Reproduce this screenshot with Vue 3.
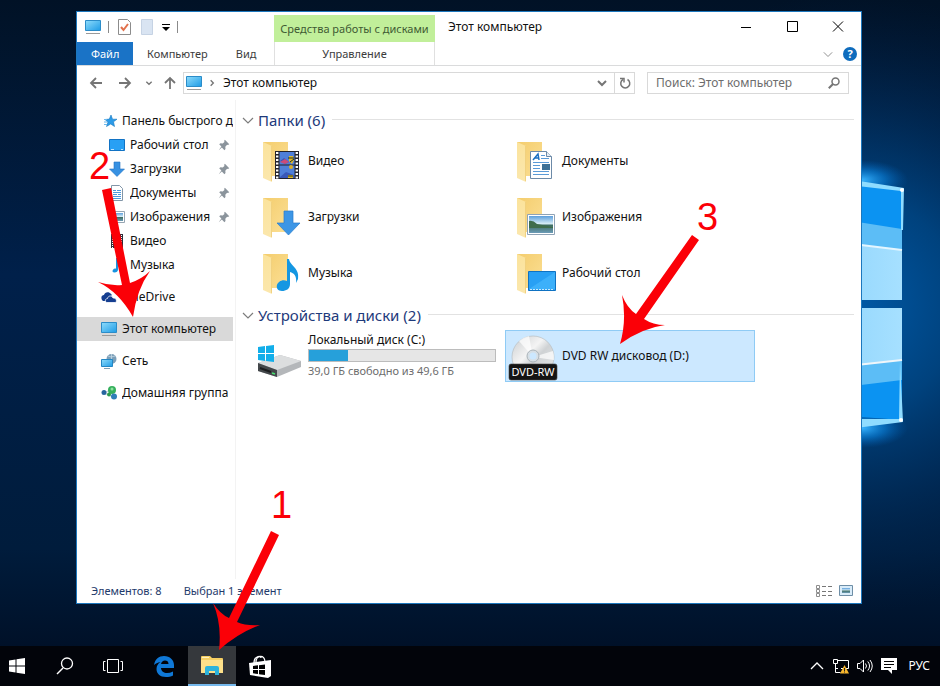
<script setup>
import { ref } from 'vue'

const places = [
  { label: 'Панель быстрого до', icon: 'star' },
  { label: 'Рабочий стол', icon: 'desktop', child: true, pinned: true },
  { label: 'Загрузки', icon: 'down', child: true, pinned: true },
  { label: 'Документы', icon: 'doc', child: true, pinned: true },
  { label: 'Изображения', icon: 'picture', child: true, pinned: true },
  { label: 'Видео', icon: 'film', child: true },
  { label: 'Музыка', icon: 'note', child: true },
  { label: 'OneDrive', icon: 'cloud', spaced: true },
  { label: 'Этот компьютер', icon: 'pc', spaced: true, current: true },
  { label: 'Сеть', icon: 'network', spaced: true },
  { label: 'Домашняя группа', icon: 'homegroup', spaced: true },
]

const folders = [
  { label: 'Видео', icon: 'video' },
  { label: 'Документы', icon: 'documents' },
  { label: 'Загрузки', icon: 'downloads' },
  { label: 'Изображения', icon: 'pictures' },
  { label: 'Музыка', icon: 'music' },
  { label: 'Рабочий стол', icon: 'desk' },
]

const totalGb = 49.6
const freeGb = 39.0
const used = Math.round((1 - freeGb / totalGb) * 100) + '%'
const query = ref('')
</script>

<template>
  <div class="desktop">
    <svg class="wallpaper" viewBox="0 0 940 686" preserveAspectRatio="xMaxYMid slice" aria-hidden="true">
      <defs>
        <linearGradient id="sky" x1="0" y1="0" x2="0" y2="1">
          <stop offset="0" stop-color="#011226" />
          <stop offset=".4" stop-color="#00204a" />
          <stop offset=".8" stop-color="#001c3c" />
          <stop offset="1" stop-color="#000c20" />
        </linearGradient>
        <radialGradient id="glow" gradientUnits="userSpaceOnUse" cx="850" cy="304" r="310">
          <stop offset="0" stop-color="#005aa8" />
          <stop offset=".35" stop-color="#004684" stop-opacity=".9" />
          <stop offset="1" stop-color="#002048" stop-opacity="0" />
        </radialGradient>
        <radialGradient id="flare">
          <stop offset="0" stop-color="#38b4ff" />
          <stop offset=".5" stop-color="#0a84e0" stop-opacity=".6" />
          <stop offset="1" stop-color="#0060b8" stop-opacity="0" />
        </radialGradient>
        <linearGradient id="pane" x1="0" y1="0" x2="1" y2="0">
          <stop offset="0" stop-color="#8ed4fc" />
          <stop offset="1" stop-color="#a6e0ff" />
        </linearGradient>
      </defs>
      <rect width="940" height="686" fill="url(#sky)" />
      <rect width="940" height="686" fill="url(#glow)" />
      <ellipse cx="862" cy="180" rx="46" ry="20" fill="url(#flare)" />
      <ellipse cx="862" cy="428" rx="46" ry="20" fill="url(#flare)" />
      <path d="M820 182 902 189V300H820Z" fill="#0b93f2" />
      <path d="M820 216 902 229V300H820Z" fill="#5cbdf6" />
      <path d="M820 241 902 250V300H820Z" fill="url(#pane)" />
      <path d="M820 240 902 250" stroke="#e4f6ff" stroke-width="2" />
      <path d="M820 308H902V420L820 414Z" fill="#0b93f2" />
      <path d="M820 308H902V380L820 390Z" fill="#5cbdf6" />
      <path d="M820 308H902V360L820 370Z" fill="url(#pane)" />
      <path d="M820 369 902 360" stroke="#f0f6fa" stroke-width="2" />
      <path d="M840 178 904 188 903 230H901V191L840 184Z" fill="#8fdcff" />
      <path d="M900 360 903 422 840 430V419L899 419Z" fill="#8fdcff" />
      <circle cx="902" cy="190" r="2" fill="#fff" />
      <circle cx="901" cy="420" r="2" fill="#fff" />
    </svg>

    <svg class="sprite" aria-hidden="true">
      <defs>
        <linearGradient id="screen" x1="0" y1="0" x2="1" y2="1">
          <stop offset="0" stop-color="#8fdcfb" />
          <stop offset="1" stop-color="#1d9be6" />
        </linearGradient>
        <linearGradient id="cover" x1="0" y1="0" x2="0" y2="1">
          <stop offset="0" stop-color="#fbe39c" />
          <stop offset="1" stop-color="#fbe7ad" />
        </linearGradient>
        <linearGradient id="back" x1="0" y1="0" x2="1" y2="1">
          <stop offset="0" stop-color="#f4cd6d" />
          <stop offset="1" stop-color="#fbdf95" />
        </linearGradient>
        <linearGradient id="disc" x1="0" y1="0" x2="1" y2="1">
          <stop offset="0" stop-color="#c9ccce" />
          <stop offset=".4" stop-color="#f4f4f4" />
          <stop offset=".55" stop-color="#cfd2d4" />
          <stop offset="1" stop-color="#e9ebec" />
        </linearGradient>
        <linearGradient id="lake" x1="0" y1="0" x2="0" y2="1">
          <stop offset="0" stop-color="#5d9fdc" />
          <stop offset=".45" stop-color="#d5ecf6" />
          <stop offset=".55" stop-color="#3f6d62" />
          <stop offset="1" stop-color="#6c9cb8" />
        </linearGradient>
      </defs>
      <symbol id="i-pc" viewBox="0 0 16 16">
        <path d="M.5 1.500h15v10H.5z" fill="url(#screen)" stroke="#2b8cc8" />
        <path d="M1 14.500h14" stroke="#9a9a9a" />
      </symbol>
      <symbol id="i-star" viewBox="0 0 16 16">
        <path d="m10 2 1.500 4.200H16l-3.500 2.600 1 4.700L9.700 11 5.500 13.500 7 9 4 6.500l4.300-.4z" fill="#2b9be8" stroke="#1878c0" stroke-width=".6" />
        <path d="M3 6.500h3M3 9h3M3 11.500h3" stroke="#6cb9ee" />
      </symbol>
      <symbol id="i-desktop" viewBox="0 0 16 16">
        <path d="M.5 2.500h15v11H.5z" fill="#28a0f4" stroke="#1273c4" />
        <path d="M2 12.500h3M12 12.500h2" stroke="#bfe5ff" />
      </symbol>
      <symbol id="i-down" viewBox="0 0 16 16">
        <path d="M5 1h6v7h4.500L8 15.500.5 8H5z" fill="#3791e2" stroke="#2474c2" stroke-width=".6" />
      </symbol>
      <symbol id="i-doc" viewBox="0 0 16 16">
        <path d="M2.500.5h8l3 3v12h-11z" fill="#fff" stroke="#8296a8" />
        <path d="M4 5.500h3M8 5.500h4M4 7.500h8M4 9.500h4M9 9.500h3M4 11.500h8M4 13.500h8" stroke="#4d9ade" />
      </symbol>
      <symbol id="i-picture" viewBox="0 0 16 16">
        <path d="M.5 2.500h15v11H.5z" fill="#fff" stroke="#96a5b2" />
        <path d="M2 4h12v8H2z" fill="url(#lake)" />
      </symbol>
      <symbol id="i-film" viewBox="0 0 16 16">
        <path d="M2 1h12v14H2z" fill="#2a2e3a" />
        <path d="M5 2h6v5H5zM5 9h6v5H5z" fill="#5c86cf" />
        <path d="M3.500 2v13M12.500 2v13" stroke="#fff" stroke-dasharray="1 1" />
      </symbol>
      <symbol id="i-note" viewBox="0 0 16 16">
        <path d="M7 1h1.500c0 3 4.500 4 3.500 8-.5-2-2-2.500-3-2.800V12.500c0 2-1.500 3-3.500 3S3 14 4 12.700s2-1.500 3-1z" fill="#1793e0" />
      </symbol>
      <symbol id="i-cloud" viewBox="0 0 16 16">
        <path d="M1 11C-.5 8 1 6 3 6c.5-3 5-4 7-1l1 1-6 6H2z" fill="#153e90" />
        <path d="M5.500 13.500C3.500 12 4.500 9.500 6.500 9.500 7 6.500 11 6 12 9c3-.5 4.500 3 2.500 4.500z" fill="#153e90" stroke="#fff" stroke-width=".8" />
      </symbol>
      <symbol id="i-network" viewBox="0 0 16 16">
        <circle cx="10.500" cy="6" r="5" fill="#7d9fb8" />
        <path d="M7 3q3 2 7 0M10.500 1v5" stroke="#c3d8e4" fill="none" stroke-width=".8" />
        <path d="M.5 6.500h11v7H.5z" fill="url(#screen)" stroke="#2487c4" />
        <path d="M3 15.500h6" stroke="#7fa0b5" />
      </symbol>
      <symbol id="i-homegroup" viewBox="0 0 16 16">
        <path d="m3 8 8-4M3 8l9 4" stroke="#b9cdd5" />
        <circle cx="3" cy="7.500" r="2.500" fill="#27659e" />
        <circle cx="11" cy="5" r="4" fill="#35b05c" />
        <circle cx="11" cy="4" r="1.500" fill="#8ee09f" />
        <circle cx="8" cy="9.500" r="2" fill="#2c9b4c" />
        <circle cx="13" cy="11.500" r="3" fill="#2f7eb8" />
      </symbol>
      <symbol id="i-pin" viewBox="0 0 16 16">
        <path d="m9 2 5 5-1.500 1-1-.3-2 2.300.2 2.500L8.500 14 5.500 10.800 2 14l3-4.300L2.500 7 4 6l2.500.3L8.500 4.500 8.200 3z" fill="#8b949c" />
      </symbol>
      <symbol id="i-chev" viewBox="0 0 12 12">
        <path d="m1 4 5 5 5-5" fill="none" stroke="currentColor" stroke-width="1.200" />
      </symbol>
      <symbol id="i-chev-bold" viewBox="0 0 12 12">
        <path d="m2 4 4 4 4-4" fill="none" stroke="currentColor" stroke-width="2" />
      </symbol>
      <symbol id="i-arrow" viewBox="0 0 14 14">
        <path d="M13 7H2M7 2 2 7l5 5" fill="none" stroke="currentColor" stroke-width="1.800" />
      </symbol>

      <symbol id="f-folder" viewBox="0 0 48 48">
        <path d="M6 5h25v34H13z" fill="url(#back)" />
        <path d="m6 5 9 4v36l-9-4z" fill="url(#cover)" />
        <path d="m14.500 9v35" stroke="#ecc870" stroke-width=".7" />
      </symbol>
      <symbol id="f-video" viewBox="0 0 48 48">
        <path d="M18 14h24v28H18z" fill="#23232b" />
        <path d="M22.500 15h15v12.500h-15zM22.500 28.500h15V41h-15z" fill="#4f7fd8" />
        <path d="m23 24 4-3 5 4-4 2zM23 40l6-5 8 3v3H23z" fill="#3a58b8" />
        <path d="m23 25 5-3 4 3-4 2z" fill="#cc4b78" />
        <path d="M32 19h4l1 4-2 4-3-3zM31 38h5v3h-5z" fill="#e0b82c" />
        <path d="M31 21h6M33 25l4-3M31 39h5" stroke="#22321c" />
        <circle cx="34" cy="30" r="2" fill="#dcae28" />
        <path d="M20.200 15v27M39.800 15v27" stroke="#fff" stroke-width="2.400" stroke-dasharray="2 1.500" />
      </symbol>
      <symbol id="f-documents" viewBox="0 0 48 48">
        <path d="M19.500 14.500h16l5 5v22h-21z" fill="#fff" stroke="#6c8aa8" />
        <path d="M35.500 14.500v5h5" fill="#e5edf4" stroke="#6c8aa8" />
        <path d="m22 23 5-6 1 6M24 21h4" fill="none" stroke="#1a70c2" stroke-width="1.500" />
        <path d="M30 18.500h4M30 21.500h8M22 25.500h16M22 28.500h7M22 31.500h7M22 34.500h16M22 37.500h16" stroke="#5a9bd8" />
        <path d="M31 27h8v6h-8z" fill="#3f7196" />
      </symbol>
      <symbol id="f-downloads" viewBox="0 0 48 48">
        <path d="M27 18h9v12h7L31.500 42 20 30h7z" fill="#3c96e6" stroke="#2a7dca" stroke-width=".7" />
      </symbol>
      <symbol id="f-pictures" viewBox="0 0 48 48">
        <path d="M16.500 21.500h27v20h-27z" fill="#fff" stroke="#8fa3b6" />
        <path d="M18 23h24v17H18z" fill="url(#lake)" />
        <path d="M18 28q4-1 8 3l16 3v1H18z" fill="#3f6d4c" />
      </symbol>
      <symbol id="f-music" viewBox="0 0 48 48">
        <path d="M30 10h2c1 7 11 9 9 20l-2 4c1-7-2-10-6-11v12c0 5-4 7-8 7s-6-3-5-6 5-6 10-4z" fill="#1597e2" />
      </symbol>
      <symbol id="f-desk" viewBox="0 0 48 48">
        <path d="M17.500 22.500h27v19h-27z" fill="#28a0f4" stroke="#0f72c2" />
        <path d="m18 40 26-17v17z" fill="#3cb0fa" />
        <path d="M19 40.500h24" stroke="#c6eaff" stroke-dasharray="2 1" />
      </symbol>
    </svg>

    <main class="workspace">
      <section class="window" aria-label="Этот компьютер">
        <header class="ribbon">
          <div class="ribbon-left">
            <div class="quick">
              <svg class="ic16"><use href="#i-pc" /></svg>
              <i class="bar"></i>
              <button class="plain" aria-label="Свойства">
                <svg class="ic16" viewBox="0 0 16 16">
                  <path d="M2.500.5h9l3 3v12h-12z" fill="#fff" stroke="#8c8c8c" />
                  <path d="m5 8 2.500 3L12 5" fill="none" stroke="#e2714c" stroke-width="2" />
                </svg>
              </button>
              <button class="plain" aria-label="Новая папка">
                <svg class="ic16" viewBox="0 0 16 16"><path d="M2.500.5h11v15h-11z" fill="#d9e4f2" stroke="#c6d3e4" /></svg>
              </button>
              <button class="plain" aria-label="Настройка панели">
                <svg class="ic8" viewBox="0 0 8 8"><path d="M0 1.500h8" stroke="#000" /><path d="M0 4h8L4 8z" /></svg>
              </button>
              <i class="bar"></i>
            </div>
            <nav class="tabs">
              <button class="tab file">Файл</button>
              <button class="tab">Компьютер</button>
              <button class="tab">Вид</button>
            </nav>
          </div>
          <div class="context">
            <div class="context-title">Средства работы с дисками</div>
            <button class="tab context-tab">Управление</button>
          </div>
          <div class="ribbon-right">
            <div class="titlebar">
              <h1>Этот компьютер</h1>
              <button class="caption" aria-label="Свернуть">
                <svg class="ic12" viewBox="0 0 12 12"><path d="M1 6.500h10" stroke="#000" /></svg>
              </button>
              <button class="caption" aria-label="Развернуть">
                <svg class="ic12" viewBox="0 0 12 12"><path d="M1.500.5h10v10h-10z" fill="none" stroke="#000" /></svg>
              </button>
              <button class="caption" aria-label="Закрыть">
                <svg class="ic12" viewBox="0 0 12 12"><path d="m1 .5 10 10M11 .5l-10 10" stroke="#000" /></svg>
              </button>
            </div>
            <div class="helpers">
              <button class="plain" aria-label="Развернуть ленту"><svg class="ic10 pale"><use href="#i-chev" /></svg></button>
              <button class="help" aria-label="Справка">?</button>
            </div>
          </div>
        </header>

        <div class="address-row">
          <button class="plain" aria-label="Назад"><svg class="ic14"><use href="#i-arrow" /></svg></button>
          <button class="plain" aria-label="Вперёд"><svg class="ic14 right"><use href="#i-arrow" /></svg></button>
          <button class="plain" aria-label="Последние места"><svg class="ic8"><use href="#i-chev-bold" /></svg></button>
          <button class="plain" aria-label="Вверх"><svg class="ic14 up"><use href="#i-arrow" /></svg></button>
          <div class="address">
            <svg class="ic16"><use href="#i-pc" /></svg>
            <svg class="ic8 side"><use href="#i-chev-bold" /></svg>
            <button class="plain crumb">Этот компьютер</button>
            <button class="plain" aria-label="История"><svg class="ic12"><use href="#i-chev-bold" /></svg></button>
            <button class="plain refresh" aria-label="Обновить">
              <svg class="ic12" viewBox="0 0 12 12">
                <path d="M8.500 2.500A4.500 4.500 0 1 1 4 2.500" fill="none" stroke="currentColor" stroke-width="1.500" />
                <path d="M1 1.500h4v4" fill="none" stroke="currentColor" stroke-width="1.500" />
              </svg>
            </button>
          </div>
          <label class="search">
            <input v-model="query" type="search" placeholder="Поиск: Этот компьютер" aria-label="Поиск: Этот компьютер" />
            <svg class="ic12" viewBox="0 0 12 12">
              <circle cx="7.500" cy="4.500" r="3.500" fill="none" stroke="currentColor" stroke-width="1.500" />
              <path d="M5 7 .8 11.200" stroke="currentColor" stroke-width="2" />
            </svg>
          </label>
        </div>

        <div class="body">
          <nav class="sidebar">
            <a
              v-for="p in places"
              :key="p.label"
              href="#"
              class="place"
              :class="{ child: p.child, spaced: p.spaced, current: p.current }"
            >
              <svg class="ic16"><use :href="'#i-' + p.icon" /></svg>
              <span class="place-name">{{ p.label }}</span>
              <svg v-if="p.pinned" class="ic14 pin"><use href="#i-pin" /></svg>
            </a>
          </nav>

          <div class="content">
            <h2 class="group">
              <svg class="ic12"><use href="#i-chev" /></svg>
              <span>Папки (6)</span>
            </h2>
            <div class="tiles">
              <button v-for="f in folders" :key="f.label" class="tile">
                <span class="ic48">
                  <svg viewBox="0 0 48 48"><use href="#f-folder" /><use :href="'#f-' + f.icon" /></svg>
                </span>
                <span>{{ f.label }}</span>
              </button>
            </div>

            <h2 class="group">
              <svg class="ic12"><use href="#i-chev" /></svg>
              <span>Устройства и диски (2)</span>
            </h2>
            <div class="tiles">
              <button class="tile">
                <span class="ic48">
                  <svg viewBox="0 0 48 48">
                    <path d="m1 31 22-8 21 6v6L20 45 1 39z" fill="#b4b7ba" />
                    <path d="m1 31 22-8 21 6-24 9z" fill="#dcdedf" />
                    <path d="m1 31 19 7v7L1 39z" fill="#43474a" />
                    <path d="m3 36 11 4" stroke="#1b1d1f" stroke-width="2" />
                    <path d="m15 41 3 1" stroke="#48e070" stroke-width="1.500" />
                    <path d="M1 15 8 14v7H1zM9 14l8-1v8H9zM1 22h7v7l-7-1zM9 22h8v8l-8-1z" fill="#12aeea" />
                  </svg>
                </span>
                <span class="drive">
                  <span>Локальный диск (C:)</span>
                  <span class="meter"><span class="meter-fill" :style="{ width: used }"></span></span>
                  <span class="free">39,0 ГБ свободно из 49,6 ГБ</span>
                </span>
              </button>
              <button class="tile selected">
                <span class="ic48">
                  <svg viewBox="0 0 48 48">
                    <circle cx="22" cy="25" r="21" fill="url(#disc)" stroke="#b9bec2" stroke-width=".7" />
                    <path d="M22 25 8 9A21 21 0 0 1 18 4zM22 25l20-6a21 21 0 0 1 1 9z" fill="#fff" opacity=".7" />
                    <circle cx="22" cy="24" r="6" fill="#d7dfe5" stroke="#aab3b9" />
                    <circle cx="22" cy="24" r="3.500" fill="#cce8ff" />
                    <rect x="-2" y="32" width="48" height="16" rx="2" fill="#141414" stroke="#444" stroke-width=".6" />
                    <text x="22" y="44" class="disc-label">DVD-RW</text>
                  </svg>
                </span>
                <span>DVD RW дисковод (D:)</span>
              </button>
            </div>
          </div>
        </div>

        <footer class="status">
          <span>Элементов: 8</span>
          <span>Выбран 1 элемент</span>
          <span class="views">
            <button class="plain" aria-label="Таблица">
              <svg class="ic16" viewBox="0 0 16 16">
                <path d="M.5 2.500h3v3h-3zM.5 6.500h3v3h-3zM.5 10.500h3v3h-3z" fill="#fff" stroke="#8d8d8d" />
                <path d="M6 3.500h10M6 8.500h10M6 12.500h10" stroke="#777" stroke-dasharray="4 2" />
              </svg>
            </button>
            <button class="plain" aria-label="Крупные значки">
              <svg class="ic14" viewBox="0 0 14 14">
                <path d="M.5 1.500h13v10H.5z" fill="#d9ecf9" stroke="#6e8ea6" />
                <path d="M3 4h8v5H3z" fill="url(#lake)" />
              </svg>
            </button>
          </span>
        </footer>
      </section>
    </main>

    <footer class="taskbar">
      <button class="task start" aria-label="Пуск">
        <svg class="ic16" viewBox="0 0 16 16" fill="#fff"><path d="M0 2.500 6.500 1.500V7.500H0zM7.500 1.300 16 0v7.500H7.500zM0 8.500h6.500v6L0 13.500zM7.500 8.500H16V16l-8.500-1.300z" /></svg>
      </button>
      <button class="task" aria-label="Поиск в Windows">
        <svg class="ic18" viewBox="0 0 18 18"><circle cx="11" cy="6.500" r="5.500" fill="none" stroke="#fff" stroke-width="1.300" /><path d="M7 11 1 17" stroke="#fff" stroke-width="1.500" /></svg>
      </button>
      <button class="task" aria-label="Представление задач">
        <svg class="ic20" viewBox="0 0 20 20" fill="none" stroke="#fff"><path d="M4.500 3.500h11v13h-11zM2.500 5.500h-2v9h2M17.500 5.500h2v9h-2" /></svg>
      </button>
      <button class="task edge" aria-label="Microsoft Edge">
        <svg class="ic22" viewBox="0 0 22 22">
          <path d="M1 10C2 4 6 1 11 1c6 0 10 4 10 9v3H8c0 3 3 5 6 5 2 0 4-.5 6-1.500v4C18 21.500 15.500 22 13 22 7 22 3.500 18.500 3.500 14c0-3 1.500-5.500 4-7C4.500 7.500 2.500 8.500 1 10zM8 9h7.500C15.500 6.500 14 5.500 12 5.500S8.500 7 8 9z" fill="#0f78d7" />
        </svg>
      </button>
      <button class="task active" aria-label="Проводник">
        <svg class="ic22" viewBox="0 0 22 22">
          <path d="M0 3q0-1 1-1h8l2 2h10q1 0 1 1v14H0z" fill="#f5cf63" />
          <path d="M0 6h22v13H0z" fill="#fce08a" />
          <path d="M4 21v-7q0-2 2-2h10q2 0 2 2v7h-4v-4H8v4z" fill="#2cb3dc" />
          <path d="M1 3.500h7" stroke="#fff1bd" />
        </svg>
      </button>
      <button class="task" aria-label="Магазин">
        <svg class="ic22" viewBox="0 0 22 22">
          <path d="M7 7c0-7 9-8 9 0M5 8c0-7 7-8 7-5" fill="none" stroke="#fff" stroke-width="1.300" />
          <path d="M0 8 22 5v16l-3 2L1 20z" fill="#fff" />
          <path d="m4 11 5-.7V14H4zM10 10.200l6-.8V14h-6zM4 15h5v4l-5-.7zM10 15h6v5l-6-.8z" fill="#000" />
        </svg>
      </button>

      <div class="tray">
        <button class="plain" aria-label="Скрытые значки">
          <svg class="ic16" viewBox="0 0 16 16"><path d="m2 11 6-6 6 6" fill="none" stroke="#fff" stroke-width="1.300" /></svg>
        </button>
        <button class="plain" aria-label="Сеть">
          <svg class="ic16" viewBox="0 0 16 16">
            <path d="M4 2.500h11.500v8H8M.5 1.500h4v4h-4zM2.500 6v8.500h5M2.500 10.500H5M6.500 14.500h-2" fill="none" stroke="#fff" />
            <path d="m11.500 7 4.500 8.500H7z" fill="#f8b62c" />
            <path d="M11.500 10v3M11.500 13.500v1" stroke="#222" />
          </svg>
        </button>
        <button class="plain" aria-label="Громкость">
          <svg class="ic16" viewBox="0 0 16 16" fill="none" stroke="#fff"><path d="M.5 5.500H3L6.500 2v12L3 10.500H.5zM8.500 5.500q2 2.500 0 5M10.800 3.500q3.500 4.500 0 9M13 2q4.500 6 0 12" /></svg>
        </button>
        <button class="plain" aria-label="Центр уведомлений">
          <svg class="ic16" viewBox="0 0 16 16"><path d="M0 0h16v12h-5v4l-4-4H0z" fill="#fff" /><path d="M3 3.500h10M3 6.500h10M3 9.500h7" stroke="#000" /></svg>
        </button>
        <button class="plain lang">РУС</button>
      </div>
    </footer>

    <div class="marks">
      <svg width="940" height="686" viewBox="0 0 940 686" fill="#fb0007" aria-hidden="true">
        <path d="M271 531 279 535 237 622Q246 626 260 625 238 633 219 650 222 624 213 603 220 614 229 618Z" />
        <path d="M102 190 111 188 130 283Q142 279 150 271 137 289 133 317 119 292 98 282 110 286 122 285Z" />
        <path d="M692 235 699 240 644 319Q653 325 665 325 642 328 620 344 627 320 622 295 627 308 636 314Z" />
      </svg>
      <span class="mark one">1</span>
      <span class="mark two">2</span>
      <span class="mark three">3</span>
    </div>
  </div>
</template>

<style>
body {
  margin: 0;
  background: #001028;
}
</style>

<style scoped>
.desktop {
  position: relative;
  display: flex;
  flex-direction: column;
  min-height: 100vh;
  overflow: hidden;
  font: 12px/16px "Noto Sans", "Open Sans", sans-serif;
  color: #111;
}
.desktop * {
  box-sizing: border-box;
}
button,
input {
  font: inherit;
  color: inherit;
}
button {
  border: 0;
  padding: 0;
  background: none;
}
svg {
  display: block;
  flex: none;
}
.wallpaper {
  position: absolute;
  inset: 0;
  width: 100%;
  height: 100%;
}
.sprite {
  position: absolute;
  width: 0;
  height: 0;
}
.ic8 { width: 8px; height: 8px; }
.ic10 { width: 10px; height: 10px; }
.ic12 { width: 12px; height: 12px; }
.ic14 { width: 14px; height: 14px; }
.ic16 { width: 16px; height: 16px; }
.ic18 { width: 18px; height: 18px; }
.ic20 { width: 20px; height: 20px; }
.ic22 { width: 22px; height: 22px; overflow: visible; }
.ic48 {
  flex: none;
  width: 48px;
  height: 48px;
}
.ic48 svg {
  width: 48px;
  height: 48px;
  overflow: visible;
}
.workspace {
  position: relative;
  flex: 1;
  display: flex;
  padding: 11px 78px 42px 76px;
}
.window {
  flex: 1;
  min-width: 0;
  display: flex;
  flex-direction: column;
  background: #fff;
  border: 1px solid #1c77bd;
}

.ribbon {
  display: flex;
  height: 54px;
  border-bottom: 1px solid #dadbdc;
}
.ribbon-left {
  width: 197px;
  display: flex;
  flex-direction: column;
}
.quick {
  flex: 1;
  display: flex;
  align-items: center;
  gap: 7px;
  padding-left: 8px;
}
.bar {
  width: 1px;
  height: 12px;
  background: #8a8a8a;
}
.tabs {
  display: flex;
  height: 23px;
}
.tab {
  height: 23px;
  padding: 0 14px;
  font-size: 11px;
  color: #3c3c3c;
}
.file {
  width: 56px;
  background: #1a73c6;
  color: #fff;
}
.context {
  display: flex;
  flex-direction: column;
  width: 161px;
  padding-top: 3px;
}
.context-title {
  flex: 1;
  display: flex;
  align-items: center;
  justify-content: center;
  background: #c1ef9a;
  font-size: 11px;
  color: #3f5a33;
  white-space: nowrap;
}
.context-tab {
  border: solid #e0e0e0;
  border-width: 0 1px;
}
.ribbon-right {
  flex: 1;
  display: flex;
  flex-direction: column;
}
.titlebar {
  flex: 1;
  display: flex;
  align-items: center;
}
h1 {
  flex: 1;
  margin: 0;
  padding-left: 13px;
  font-size: 12px;
  font-weight: 400;
}
.caption {
  width: 46px;
  height: 29px;
  display: grid;
  place-items: center;
}
.helpers {
  height: 23px;
  display: flex;
  align-items: center;
  justify-content: flex-end;
  gap: 10px;
  padding-right: 4px;
}
.pale {
  color: #909090;
}
.help {
  width: 14px;
  height: 14px;
  border-radius: 50%;
  background: #0f6cbd;
  color: #fff;
  font-weight: 700;
  font-size: 11px;
  line-height: 14px;
}

.address-row {
  display: flex;
  align-items: center;
  height: 34px;
  padding: 0 12px;
  color: #757575;
}
.address-row > .plain {
  margin-right: 15px;
}
.address-row > .plain:nth-child(2) {
  margin-right: 13px;
}
.address-row > .plain:nth-child(3) {
  margin-right: 10px;
}
.address-row > .plain:nth-child(4) {
  margin-right: 6px;
}
.right { transform: rotate(180deg); }
.up { transform: rotate(90deg); }
.side { transform: rotate(-90deg); }
.address {
  flex: 1;
  display: flex;
  align-items: center;
  gap: 6px;
  height: 22px;
  padding-left: 2px;
  border: 1px solid #d9d9d9;
}
.crumb {
  flex: 1;
  padding-left: 1px;
  text-align: left;
  color: #111;
}
.refresh {
  display: grid;
  place-items: center;
  width: 20px;
  height: 20px;
  border-left: 1px solid #d9d9d9;
}
.search {
  display: flex;
  align-items: center;
  width: 202px;
  height: 22px;
  margin-left: 12px;
  padding: 0 8px;
  border: 1px solid #d9d9d9;
}
.search input {
  flex: 1;
  min-width: 0;
  padding: 0;
  border: 0;
  outline: 0;
  background: none;
  appearance: none;
}
.search input::placeholder {
  color: #6d6d6d;
  opacity: 1;
}

.body {
  flex: 1;
  display: flex;
}
.sidebar {
  width: 156px;
  padding-top: 9px;
}
.place {
  display: flex;
  align-items: center;
  gap: 5px;
  height: 24px;
  padding-left: 24px;
  color: inherit;
  text-decoration: none;
  white-space: nowrap;
}
.place-name {
  flex: 1;
  min-width: 0;
  overflow: hidden;
}
.child {
  padding-left: 32px;
}
.spaced {
  margin-top: 8px;
}
.current {
  background: #d9d9d9;
}
.pin {
  margin-right: 2px;
}
.content {
  flex: 1;
  margin-left: 2px;
  padding: 4px 7px 0 6px;
  border-left: 1px solid #f3f3f3;
}
.group {
  display: flex;
  align-items: center;
  height: 31px;
  margin: 0;
  font-size: 15px;
  line-height: 20px;
  font-weight: 400;
  color: #1e3a7b;
}
.group svg {
  margin-right: 4px;
  color: #7c7c7c;
}
.group::after {
  content: "";
  flex: 1;
  height: 1px;
  margin-left: 7px;
  background: #e2e2e2;
}
.tiles {
  display: grid;
  grid-template-columns: repeat(auto-fill, 250px);
  grid-auto-rows: 52px;
  gap: 4px;
  padding-left: 9px;
}
.tile {
  display: flex;
  align-items: center;
  gap: 3px;
  padding: 0 4px 0 5px;
  border: 1px solid transparent;
  text-align: left;
}
.selected {
  background: #cce8ff;
  border-color: #8fcbf5;
}
.drive {
  flex: 1;
  display: flex;
  flex-direction: column;
  gap: 1px;
  padding-bottom: 2px;
}
.meter {
  height: 13px;
  border: 1px solid #bcbcbc;
  background: #e6e6e6;
}
.meter-fill {
  display: block;
  height: 100%;
  background: #26a0da;
}
.free {
  font-size: 11px;
  color: #6d6d6d;
}
.disc-label {
  font-size: 11px;
  fill: #fff;
  text-anchor: middle;
}
.status {
  display: flex;
  align-items: center;
  gap: 22px;
  height: 24px;
  padding: 0 8px 0 14px;
  font-size: 11px;
  color: #1e3a6b;
}
.views {
  display: flex;
  align-items: center;
  gap: 7px;
  margin-left: auto;
}

.taskbar {
  position: relative;
  display: flex;
  height: 40px;
  background: #02040a;
  color: #fff;
}
.task {
  width: 48px;
  display: grid;
  place-items: center;
}
.start {
  width: 41px;
  padding-right: 8px;
}
.edge {
  margin-left: 3px;
}
.active {
  background: #35383c;
  border-bottom: 2px solid #76b9ed;
}
.tray {
  display: flex;
  align-items: center;
  gap: 8px;
  margin-left: auto;
  padding-right: 10px;
}
.lang {
  margin-left: 3px;
}

.marks {
  position: absolute;
  top: 0;
  left: 0;
  pointer-events: none;
}
.mark {
  position: absolute;
  font: 38px/38px "Liberation Sans", sans-serif;
  color: #fb0007;
}
.one { left: 271px; top: 486px; }
.two { left: 89px; top: 147px; }
.three { left: 697px; top: 198px; }
</style>
